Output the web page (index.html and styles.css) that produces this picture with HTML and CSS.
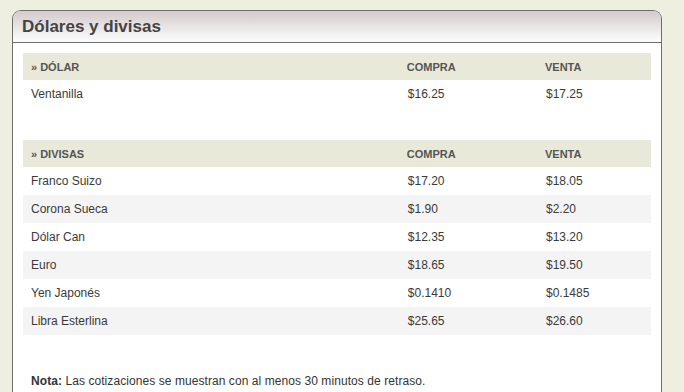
FILE: index.html
```html
<!DOCTYPE html>
<html lang="es">
<head>
<meta charset="utf-8">
<title>Dólares y divisas</title>
<link rel="stylesheet" href="styles.css">
</head>
<body>
<div class="panel">
  <div class="panel-head"><h2 class="panel-title">Dólares y divisas</h2></div>
  <div class="panel-body">
    <table class="rates">
      <thead>
        <tr><th class="c-name">» DÓLAR</th><th class="c-buy">COMPRA</th><th class="c-sell">VENTA</th></tr>
      </thead>
      <tbody>
        <tr><td>Ventanilla</td><td>$16.25</td><td>$17.25</td></tr>
      </tbody>
    </table>
    <table class="rates rates-second">
      <thead>
        <tr><th class="c-name">» DIVISAS</th><th class="c-buy">COMPRA</th><th class="c-sell">VENTA</th></tr>
      </thead>
      <tbody>
        <tr><td>Franco Suizo</td><td>$17.20</td><td>$18.05</td></tr>
        <tr class="alt"><td>Corona Sueca</td><td>$1.90</td><td>$2.20</td></tr>
        <tr><td>Dólar Can</td><td>$12.35</td><td>$13.20</td></tr>
        <tr class="alt"><td>Euro</td><td>$18.65</td><td>$19.50</td></tr>
        <tr><td>Yen Japonés</td><td>$0.1410</td><td>$0.1485</td></tr>
        <tr class="alt"><td>Libra Esterlina</td><td>$25.65</td><td>$26.60</td></tr>
      </tbody>
    </table>
    <p class="note"><strong>Nota:</strong> Las cotizaciones se muestran con al menos 30 minutos de retraso.</p>
  </div>
</div>
</body>
</html>
```
FILE: styles.css
```css
html, body {
  margin: 0;
  padding: 0;
  background: #efefdf;
  font-family: "Liberation Sans", Arial, sans-serif;
  color: #333;
}
body {
  height: 100vh;
  overflow: hidden;
}
.panel {
  margin: 10px 22px 0 12px;
  height: calc(100vh - 11px);
  background: #fff;
  border: 1px solid #6e6e6e;
  border-bottom: none;
  border-radius: 9px 9px 0 0;
  overflow: hidden;
}
.panel-head {
  height: 31px;
  border-bottom: 1px solid #6e6e6e;
  background: linear-gradient(to bottom, #d2cacc 0%, #e6e1e2 45%, #fdfdfd 100%);
  display: flex;
  align-items: center;
  padding-left: 9px;
}
.panel-title {
  margin: 0;
  font-size: 17px;
  font-weight: bold;
  color: #444;
}
.panel-body {
  padding: 10px 10px 0 10px;
}
.rates {
  width: 100%;
  border-collapse: collapse;
  font-size: 12px;
}
.rates-second {
  margin-top: 32px;
}
.rates th {
  height: 27px;
  padding: 0 8px;
  background: #e9e9da;
  text-align: left;
  font-size: 11px;
  font-weight: bold;
  color: #555;
}
.c-name { width: 60%; }
.c-buy { width: 22%; }
.rates th.c-buy, .rates th.c-sell { padding-left: 7px; }
.rates td {
  height: 28px;
  padding: 0 8px;
  color: #3a3a3a;
}
.rates tr.alt td {
  background: #f4f4f4;
}
.note {
  margin: 38px 0 0 0;
  padding-left: 8px;
  font-size: 12px;
  line-height: 16px;
  letter-spacing: 0.07px;
  color: #333;
}
.note strong {
  color: #333;
}
```
